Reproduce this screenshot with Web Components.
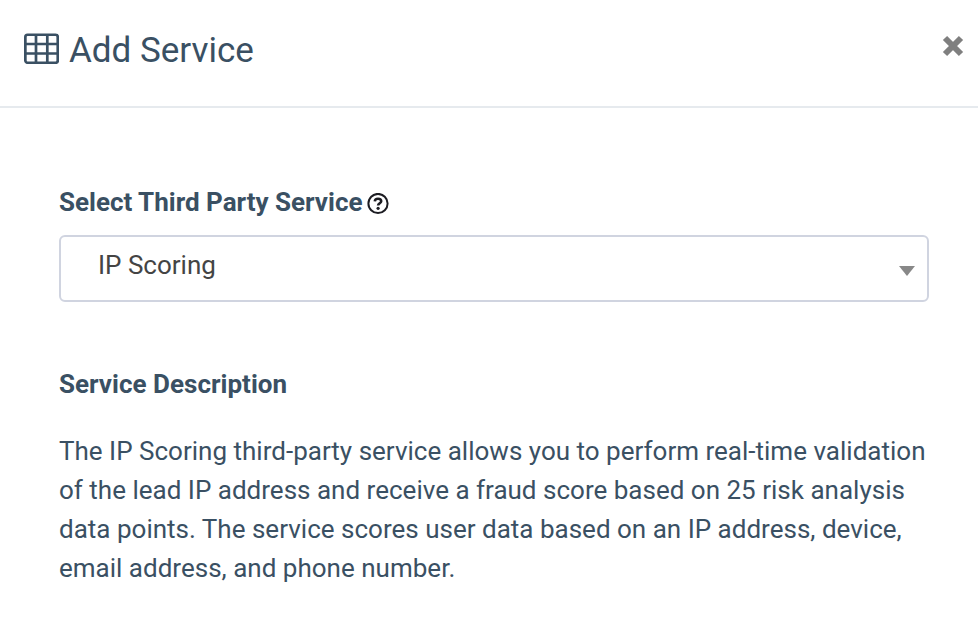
<!DOCTYPE html>
<html lang="en"><head><meta charset="utf-8"><title>Add Service</title>
<style>body{margin:0;background:#fff;font-family:Roboto,"Liberation Sans",sans-serif;color:#3a5063}</style></head>
<body>
<service-dialog>
<dialog-header slot="header">Add Service</dialog-header>
<service-select label="Select Third Party Service">IP Scoring</service-select>
<service-description heading="Service Description">The IP Scoring third-party service allows you to perform real-time validation of the lead IP address and receive a fraud score based on 25 risk analysis data points. The service scores user data based on an IP address, device, email address, and phone number.</service-description>
</service-dialog>
<script>
const define=(name,html)=>customElements.define(name,class extends HTMLElement{
constructor(){super();this.attachShadow({mode:'open'}).innerHTML=html;}
connectedCallback(){for(const n of this.shadowRoot.querySelectorAll('[data-attr]'))n.textContent=this.getAttribute(n.dataset.attr);}
});
define('grid-icon',`<style>:host{display:block;width:35px;height:31px}svg{display:block}</style>
<svg width="35" height="31" viewBox="0 0 35 31" fill="none" stroke="currentColor" stroke-width="2.7"><rect x="1.35" y="1.75" width="32.4" height="28" rx="2.2"/><path d="M1 11h33M1 20.5h33M12 1.5v28M23.3 1.5v28"/></svg>`);
define('close-icon',`<style>:host{display:block}svg{display:block}</style>
<svg width="22" height="22" viewBox="0 0 22 22" stroke="#7f7f7f" stroke-width="6"><path d="M3 3l16 16M19 3L3 19"/></svg>`);
define('help-icon',`<style>:host{display:block}svg{display:block}</style>
<svg width="22" height="22" viewBox="0 0 22 22" fill="none" stroke="#1c1c22" stroke-width="2"><circle cx="11" cy="10.5" r="9.6"/><path d="M7.8 8.4C7.9 6.6 9.2 5.7 11 5.7s3.2 1 3.2 2.5c0 2-3.1 2.1-3.1 4.3" stroke-width="2.6"/><circle cx="11.1" cy="15.3" r="1.6" fill="#1c1c22" stroke="none"/></svg>`);
define('dialog-header',`<style>:host{display:flex;box-sizing:border-box;height:108px;padding:33px 14px 0 24px;border-bottom:2px solid #e6eaee;align-items:flex-start}
h1{margin:-5px 0 0 10px;font-size:35px;font-weight:400;line-height:46px;flex:1}close-icon{margin-top:2px}</style>
<grid-icon></grid-icon><h1><slot></slot></h1><close-icon></close-icon>`);
define('service-select',`<style>:host{display:block}
.label{display:flex;align-items:center;gap:4px;font-size:26px;font-weight:700;line-height:36px}help-icon{margin-top:3px}
.box{box-sizing:border-box;height:67px;margin-top:15px;border:2px solid #d0d4e0;border-radius:6px;padding:0 12px 0 37px;display:flex;justify-content:space-between;align-items:center;font-size:26px;line-height:36px;color:#444}
.value{margin-top:-8px}svg{display:block;margin-top:5px}</style>
<div class="label"><span data-attr="label"></span><help-icon></help-icon></div>
<div class="box"><span class="value"><slot></slot></span><svg width="16" height="10" viewBox="0 0 16 10"><path fill="#888" d="M0 0h16L8 10z"/></svg></div>`);
define('service-description',`<style>:host{display:block;margin-top:64px}h2{font-size:26px;line-height:36px;font-weight:700;margin:0 0 30px;letter-spacing:.02px}p{margin:0;font-size:26px;line-height:39px;letter-spacing:.008px}</style>
<h2 data-attr="heading"></h2><p><slot></slot></p>`);
define('service-dialog',`<style>:host{display:block;height:632px;overflow:hidden}main{padding:76px 49px 0 59px}</style><slot name="header"></slot><main><slot></slot></main>`);
</script></body></html>
